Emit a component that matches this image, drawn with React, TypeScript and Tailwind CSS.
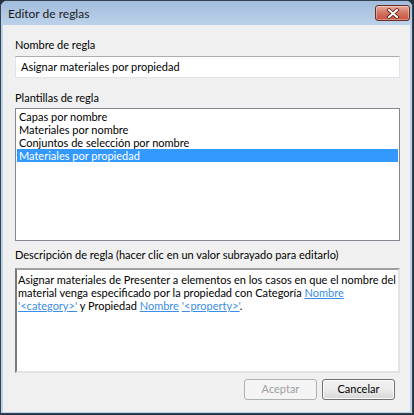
import React from 'react';

const font = { fontFamily: 'Lato, "Liberation Sans", sans-serif' };

const plantillas = [
  'Capas por nombre',
  'Materiales por nombre',
  'Conjuntos de selección por nombre',
  'Materiales por propiedad',
];

const CloseButton: React.FC = () => (
  <div className="w-[35px] h-[16px] rounded-[3px] border border-[#6b2b22] bg-gradient-to-b from-[#e9aa9c] via-[#d27562] to-[#c4503c] flex items-center justify-center shadow-[inset_0_0_0_1px_rgba(255,255,255,0.35)]">
    <svg width="14" height="11" viewBox="0 0 14 11">
      <path d="M3 2 L11 9 M11 2 L3 9" stroke="#5a1a12" strokeWidth="3.6" strokeLinecap="square" />
      <path d="M3 2 L11 9 M11 2 L3 9" stroke="#ffffff" strokeWidth="2" strokeLinecap="square" />
    </svg>
  </div>
);

const Link: React.FC<{ children: React.ReactNode }> = ({ children }) => (
  <span className="text-[#3a8ee6] underline">{children}</span>
);

export default function App() {
  return (
    <div className="w-[414px] h-[415px] bg-[#24303c]" style={font}>
      <div className="w-[413px] h-[414px] rounded-t-[7px] border border-[#34414f] bg-[#bcd3ec] flex flex-col">
        {/* title bar */}
        <div className="h-[24px] rounded-t-[6px] bg-gradient-to-b from-[#a2bcdc] to-[#bcd2ea] flex items-start justify-between pl-[7px] pr-[2px]">
          <span className="mt-[5px] text-[12px] leading-[16px] text-[#1a1a1a]">Editor de reglas</span>
          <div className="mt-[4px]">
            <CloseButton />
          </div>
        </div>

        {/* content */}
        <div className="mx-[2px] mb-[1px] flex-1 bg-[#f0f0f0] pl-[12px] pr-[10px] pt-[12px] text-[11px] text-black">
          <div className="h-[16px] leading-[16px]">Nombre de regla</div>
          <div className="mt-[3px] h-[22px] bg-white border border-[#e2e3ea] border-t-[#abadb3] flex items-center pl-[5px]">
            Asignar materiales por propiedad
          </div>

          <div className="mt-[12px] h-[16px] leading-[16px]">Plantillas de regla</div>
          <div className="mt-[2px] h-[133px] bg-white border border-[#828790] p-px">
            {plantillas.map((p, i) => (
              <div
                key={p}
                className={`h-[13px] leading-[13px] pl-[2px] ${
                  i === 3 ? 'bg-[#3399ff] text-white' : 'text-black'
                }`}
              >
                {p}
              </div>
            ))}
          </div>

          <div className="mt-[6px] h-[16px] leading-[16px]">
            Descripción de regla (hacer clic en un valor subrayado para editarlo)
          </div>
          <div className="mt-[5px] h-[105px] bg-white border-2 border-t-[#a0a0a0] border-l-[#7a7a7a] border-r-[#e3e3e3] border-b-[#e3e3e3] pl-[1px] pt-[3px] leading-[13px]">
            <div className="whitespace-nowrap">
              Asignar materiales de Presenter a elementos en los casos en que el nombre del
            </div>
            <div className="whitespace-nowrap">
              material venga especificado por la propiedad con Categoría <Link>Nombre</Link>
            </div>
            <div className="whitespace-nowrap">
              <Link>'&lt;category&gt;'</Link> y Propiedad <Link>Nombre</Link> <Link>'&lt;property&gt;'</Link>.
            </div>
          </div>

          <div className="mt-[6px] flex justify-end gap-[5px] pr-[5px]">
            <button className="w-[73px] h-[21px] rounded-[3px] border border-[#adb2b5] bg-[#f4f4f4] text-[#a0a0a0] text-[11px]">
              Aceptar
            </button>
            <button className="w-[73px] h-[21px] rounded-[3px] border border-[#707070] bg-gradient-to-b from-[#f2f2f2] via-[#ebebeb] to-[#d6d6d6] text-black text-[11px] shadow-[inset_0_0_0_1px_#fcfcfc]">
              Cancelar
            </button>
          </div>
        </div>
      </div>
    </div>
  );
}
